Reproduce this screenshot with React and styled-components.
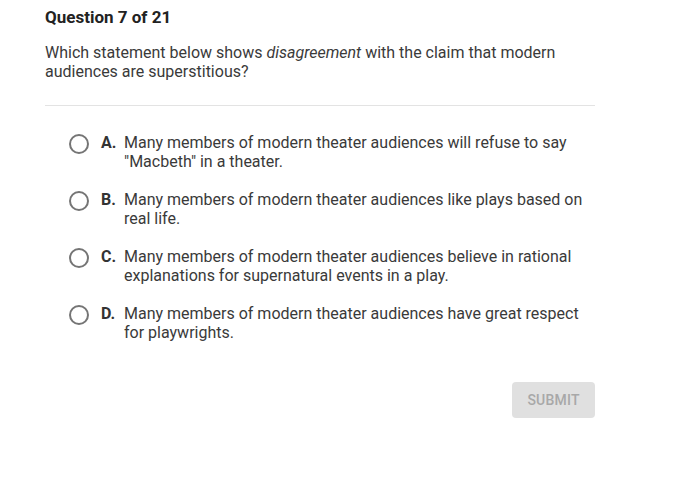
import React from "react";
import styled, { createGlobalStyle } from "styled-components";

const Global = createGlobalStyle`
  html, body { margin: 0; padding: 0; background: #fff; }
  body { font-family: Roboto, "Open Sans", Arial, sans-serif; color: #333; }
`;

const Page = styled.div`
  width: 550px;
  padding: 7px 0 0 45px;
`;

const Heading = styled.h1`
  margin: 0;
  font-size: 17px;
  line-height: 20px;
  font-weight: 700;
  color: #222;
`;

const Prompt = styled.p`
  margin: 16px 0 0;
  font-size: 16px;
  line-height: 19px;
  color: #3a3a3a;
  em { font-style: italic; }
`;

const Divider = styled.hr`
  margin: 24px 0 0;
  border: 0;
  border-top: 1px solid #e3e3e3;
`;

const Options = styled.div`
  display: flex;
  flex-direction: column;
  gap: 19px;
  margin-top: 27px;
  padding-left: 24px;
`;

const Option = styled.label`
  display: flex;
  align-items: flex-start;
  font-size: 16px;
  line-height: 19px;
  cursor: pointer;
`;

const Radio = styled.span`
  flex: none;
  width: 16px;
  height: 16px;
  border: 2px solid #757575;
  border-radius: 50%;
  margin-top: 1px;
  margin-right: 12px;
`;

const Letter = styled.span`
  flex: none;
  width: 23px;
  font-weight: 700;
  color: #333;
`;

const Text = styled.span`
  color: #3a3a3a;
`;

const Footer = styled.div`
  display: flex;
  justify-content: flex-end;
  margin-top: 40px;
`;

const Submit = styled.button`
  width: 83px;
  height: 36px;
  border: 0;
  border-radius: 4px;
  background: #e0e0e0;
  color: #a8a8a8;
  font-family: Roboto, Arial, sans-serif;
  font-size: 14px;
  font-weight: 500;
  letter-spacing: 0.2px;
  text-transform: uppercase;
`;

const options = [
  ["A.", 'Many members of modern theater audiences will refuse to say "Macbeth" in a theater.'],
  ["B.", "Many members of modern theater audiences like plays based on real life."],
  ["C.", "Many members of modern theater audiences believe in rational explanations for supernatural events in a play."],
  ["D.", "Many members of modern theater audiences have great respect for playwrights."],
];

export default function App() {
  return (
    <Page>
      <Global />
      <Heading>Question 7 of 21</Heading>
      <Prompt>
        Which statement below shows <em>disagreement</em> with the claim that modern audiences are superstitious?
      </Prompt>
      <Divider />
      <Options>
        {options.map(([l, t]) => (
          <Option key={l}>
            <Radio />
            <Letter>{l}</Letter>
            <Text>{t}</Text>
          </Option>
        ))}
      </Options>
      <Footer>
        <Submit disabled>Submit</Submit>
      </Footer>
    </Page>
  );
}
